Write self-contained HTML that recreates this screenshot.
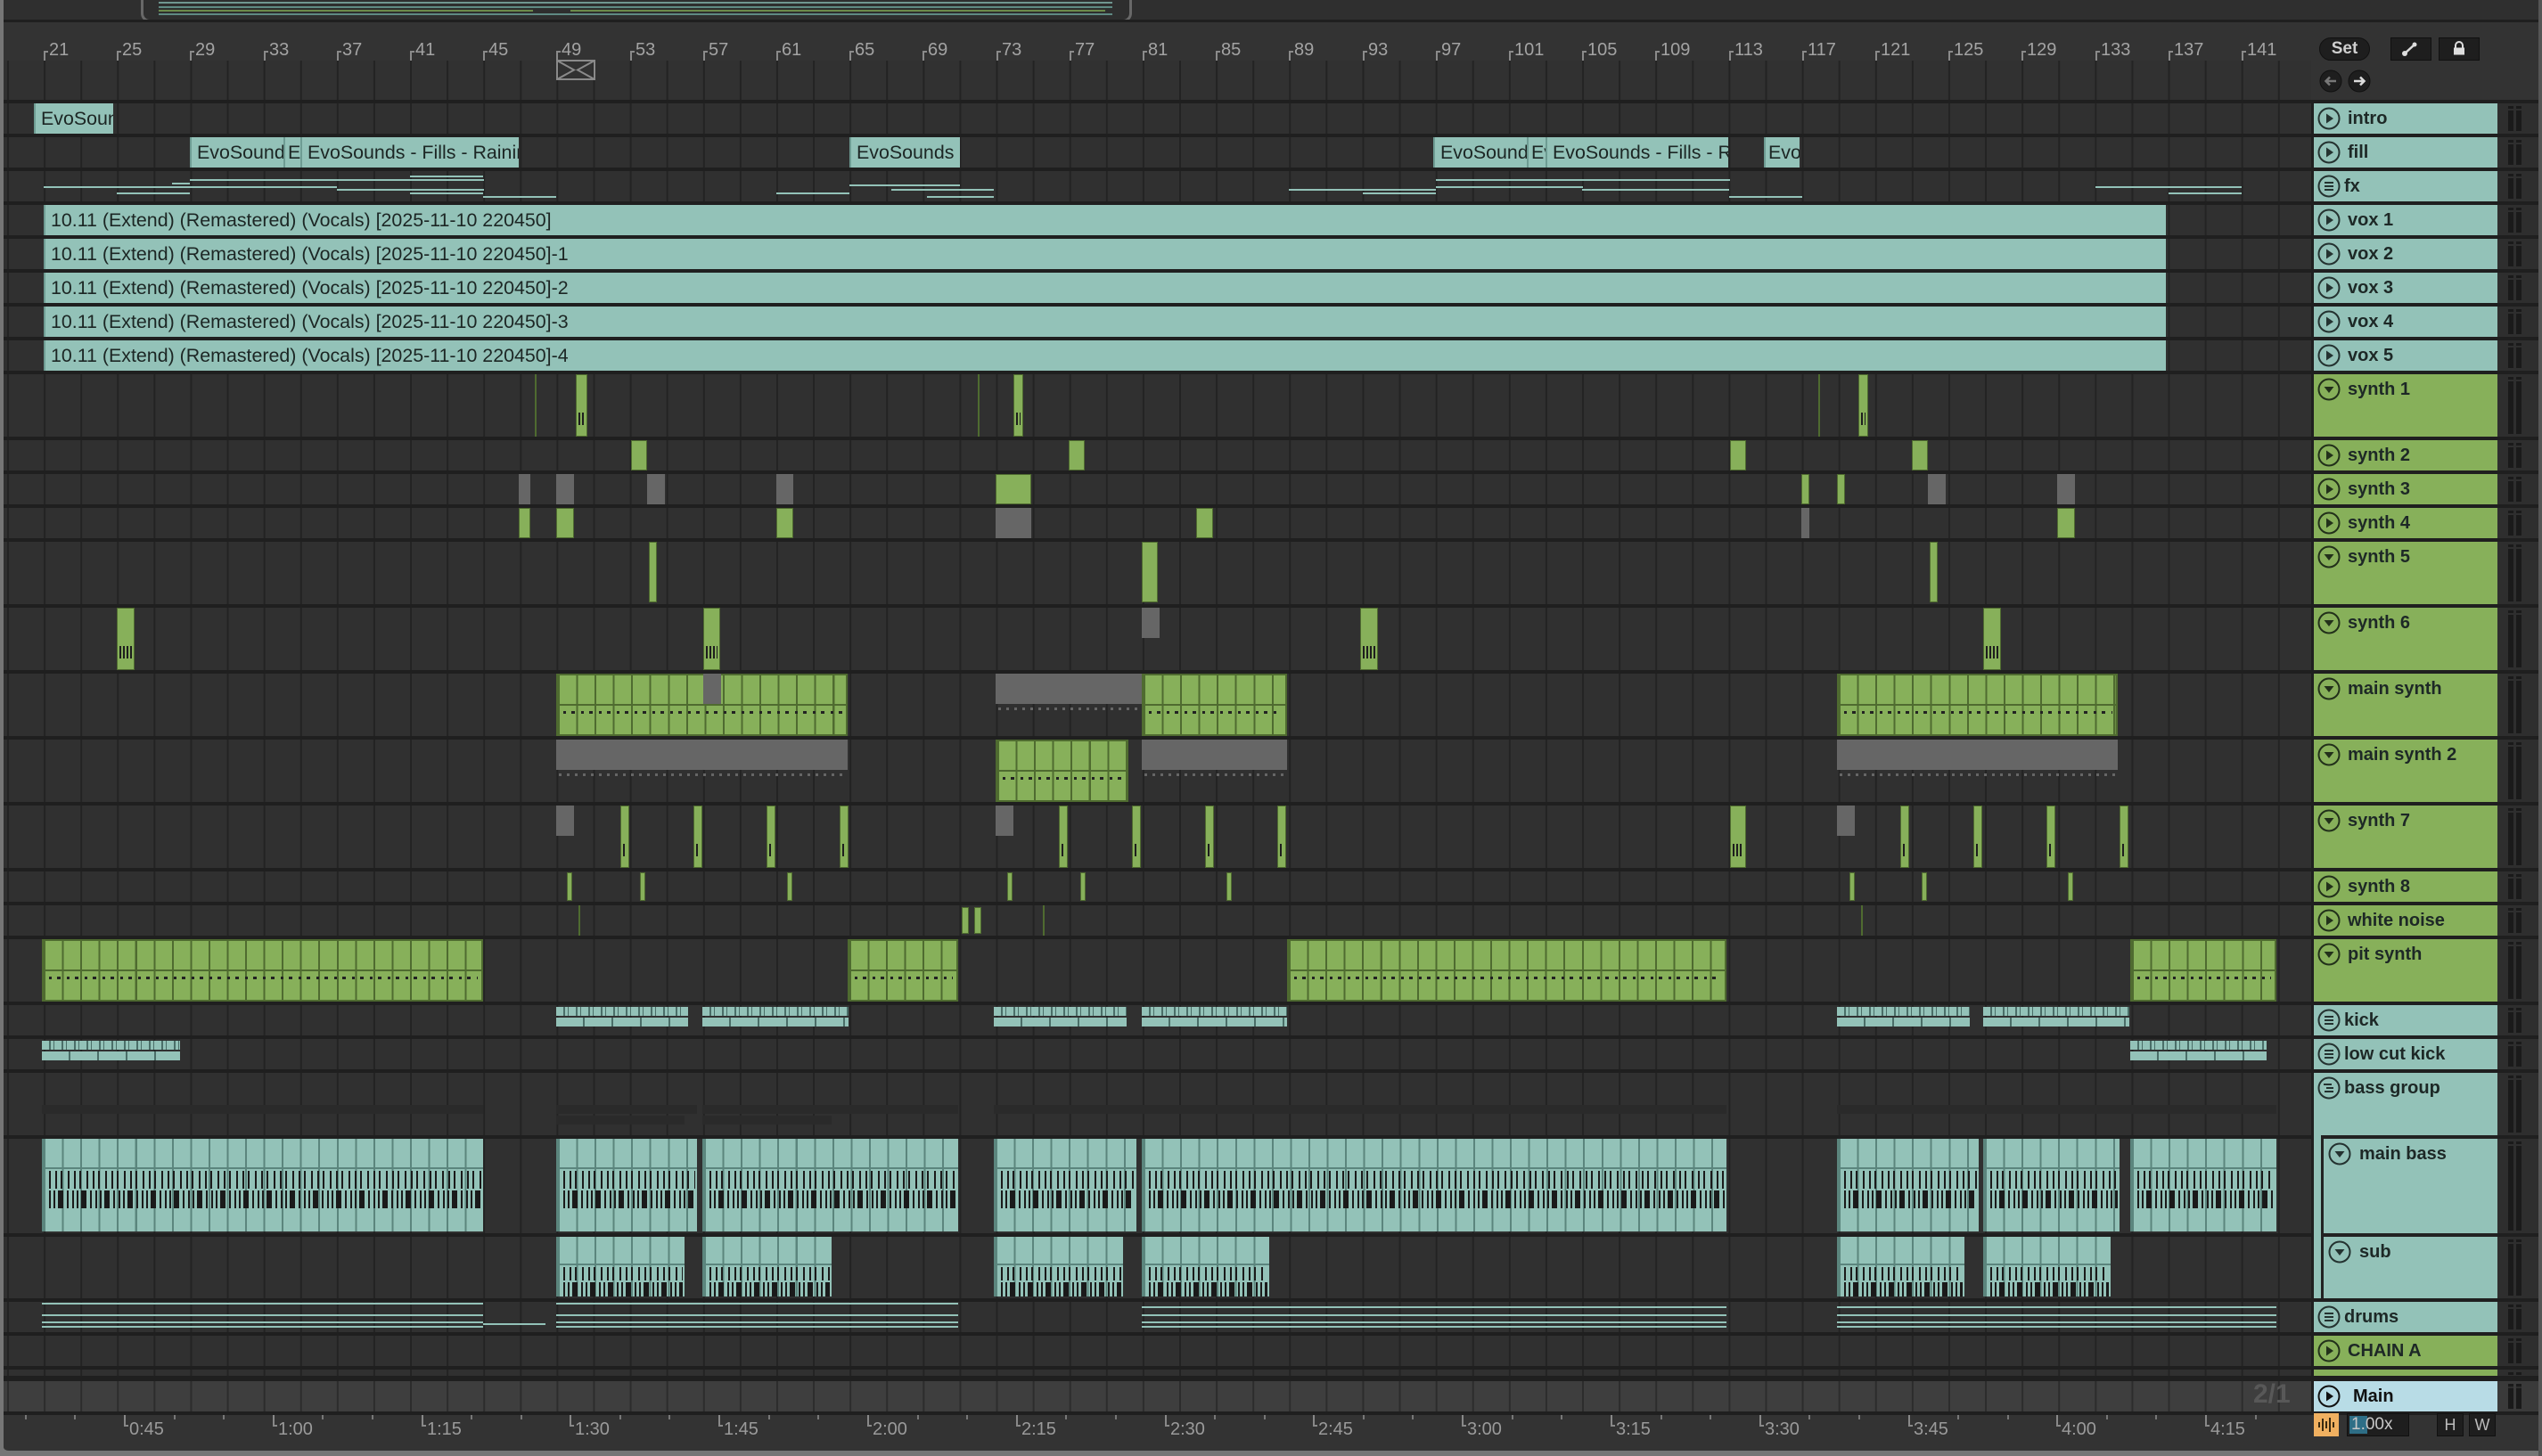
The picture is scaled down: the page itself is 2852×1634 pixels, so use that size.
<!DOCTYPE html>
<html><head><meta charset="utf-8"><style>
body{margin:0;width:2852px;height:1634px;background:#2b2b2b;overflow:hidden;position:relative;font-family:"Liberation Sans",sans-serif}
div{position:absolute;box-sizing:border-box}
.ln{left:4px;width:2589px;background-color:#303030;background-image:linear-gradient(90deg,#232323 0 2px,transparent 2px);background-size:41.1px 100%;background-position:4px 0}
.rn{top:45px;font-size:20px;color:#a3a3a3;letter-spacing:0}
.tk{top:57px;width:2px;height:11px;background:#8a8a8a}
.tk:after{content:"";position:absolute;left:0;top:0;width:5px;height:2px;background:#8a8a8a}
.ac{background:#93c2b8;border-left:2px solid #6e9c93;color:#1c2624;font-size:21.4px;line-height:34px;padding-left:6px;white-space:nowrap;overflow:hidden}
.gc{background-color:#87b05a;background-image:repeating-linear-gradient(90deg,#4f6b30 0 2px,transparent 2px 20.55px);border:2px solid #4f6b30}
.gc:before{content:"";position:absolute;left:0;right:0;top:32px;height:2px;background:#4f6b30}
.gc:after{content:"";position:absolute;left:6px;right:4px;top:40px;height:3px;background:repeating-linear-gradient(90deg,#222 0 3px,transparent 3px 9px,#222 9px 13px,transparent 13px 20px)}
.gy{background:#666}
.gs{background:#87b05a;border:1px solid #4f6b30}
.gs2{background:#87b05a;border:1px solid #4f6b30}
.gs2:after{content:"";position:absolute;left:2px;right:2px;top:42px;height:14px;background:repeating-linear-gradient(90deg,#1e1e1e 0 2px,transparent 2px 4px)}
.gl{width:3px;background:#6f9448}
.bc{background-color:#93c2b8;background-image:repeating-linear-gradient(90deg,#5b857d 0 2px,transparent 2px 20.55px);border-left:2px solid #5b857d}
.bc:before{content:"";position:absolute;left:0;right:0;top:32px;height:2px;background:#5b857d}
.bc i{position:absolute;left:6px;right:2px;top:36px;height:20px;background:repeating-linear-gradient(90deg,#1a1a1a 0 2px,transparent 2px 7px,#1a1a1a 7px 9px,transparent 9px 13px,#1a1a1a 13px 15px,transparent 15px 21px)}
.bc b{position:absolute;left:6px;right:2px;top:58px;height:20px;background:repeating-linear-gradient(90deg,#1a1a1a 0 2px,transparent 2px 5px,#1a1a1a 5px 7px,transparent 7px 10px,#1a1a1a 10px 16px,transparent 16px 20px,#1a1a1a 20px 22px,transparent 22px 26px)}
.sc{background-color:#93c2b8;background-image:repeating-linear-gradient(90deg,#5b857d 0 2px,transparent 2px 20.55px);border-left:2px solid #5b857d}
.sc:before{content:"";position:absolute;left:0;right:0;top:30px;height:2px;background:#5b857d}
.sc i{position:absolute;left:6px;right:2px;top:34px;height:15px;background:repeating-linear-gradient(90deg,#1a1a1a 0 2px,transparent 2px 7px,#1a1a1a 7px 9px,transparent 9px 13px,#1a1a1a 13px 15px,transparent 15px 21px)}
.sc b{position:absolute;left:6px;right:2px;top:51px;height:16px;background:repeating-linear-gradient(90deg,#1a1a1a 0 2px,transparent 2px 5px,#1a1a1a 5px 7px,transparent 7px 10px,#1a1a1a 10px 16px,transparent 16px 20px)}
.kc{height:10px;background:repeating-linear-gradient(90deg,#93c2b8 0 8px,#4a6e68 8px 10px,#93c2b8 10px 13px,#4a6e68 13px 14px)}
.kd{height:10px;background:repeating-linear-gradient(90deg,#93c2b8 0 30px,#4a6e68 30px 32px)}
.hl{height:2px;background:#93c2b8}
.lb{left:2596px;width:206px;font-weight:bold;font-size:20px;color:#1d2826;line-height:34px;padding-left:38px;white-space:nowrap}
.lb svg{position:absolute;left:4px;top:4px}
.t{background:#93c2b8}.g{background:#87b05a}.m{background:#b8dce6;color:#111}
.mt{left:2802px;width:46px;background:#2e2e2e}
.mt:before{content:"";position:absolute;left:12px;top:3px;width:6px;bottom:3px;background:#1a1a1a;border-top:3px solid #1a1a1a;box-shadow:inset 0 2px 0 #2e2e2e}
.mt:after{content:"";position:absolute;left:21px;top:3px;width:6px;bottom:3px;background:#1a1a1a;box-shadow:inset 0 2px 0 #2e2e2e;border-top:3px solid #1a1a1a}
.tl{top:1593px;font-size:20px;color:#9a9a9a}
.tb{top:1588px;width:2px;height:13px;background:#888}
.tb:after{content:"";position:absolute;left:0;bottom:0;width:5px;height:2px;background:#888}
.ts{top:1588px;width:2px;height:5px;background:#777}
</style></head><body>

<div style="left:0;top:0;width:2852px;height:22px;background:#2f2f2f"></div>
<div style="left:158px;top:-6px;width:1112px;height:31px;border:3px solid #686868;border-radius:0 0 10px 10px;background:#2e2e2e"></div>
<div style="left:178px;top:2px;width:1070px;height:2px;background:#6f9690"></div>
<div style="left:178px;top:7px;width:1070px;height:2px;background:#5f8a83"></div>
<div style="left:178px;top:11px;width:420px;height:2px;background:#6b8a4a"></div>
<div style="left:640px;top:11px;width:600px;height:2px;background:#6b8a4a"></div>
<div style="left:178px;top:15px;width:1070px;height:2px;background:#5f8a83"></div>
<div style="left:0;top:22px;width:2852px;height:3px;background:#1f1f1f"></div>
<div style="left:0;top:25px;width:2596px;height:43px;background:#333"></div>
<div class="ln" style="top:68px;height:44px;background-color:#313131"></div>
<div style="left:2596px;top:25px;width:252px;height:87px;background:#333"></div>
<div style="left:2593px;top:68px;width:3px;height:44px;background:#333"></div>

<div class="tk" style="left:49px"></div><div class="rn" style="left:55px">21</div>
<div class="tk" style="left:131px"></div><div class="rn" style="left:137px">25</div>
<div class="tk" style="left:213px"></div><div class="rn" style="left:219px">29</div>
<div class="tk" style="left:296px"></div><div class="rn" style="left:302px">33</div>
<div class="tk" style="left:378px"></div><div class="rn" style="left:384px">37</div>
<div class="tk" style="left:460px"></div><div class="rn" style="left:466px">41</div>
<div class="tk" style="left:542px"></div><div class="rn" style="left:548px">45</div>
<div class="tk" style="left:624px"></div><div class="rn" style="left:630px">49</div>
<div class="tk" style="left:707px"></div><div class="rn" style="left:713px">53</div>
<div class="tk" style="left:789px"></div><div class="rn" style="left:795px">57</div>
<div class="tk" style="left:871px"></div><div class="rn" style="left:877px">61</div>
<div class="tk" style="left:953px"></div><div class="rn" style="left:959px">65</div>
<div class="tk" style="left:1035px"></div><div class="rn" style="left:1041px">69</div>
<div class="tk" style="left:1118px"></div><div class="rn" style="left:1124px">73</div>
<div class="tk" style="left:1200px"></div><div class="rn" style="left:1206px">77</div>
<div class="tk" style="left:1282px"></div><div class="rn" style="left:1288px">81</div>
<div class="tk" style="left:1364px"></div><div class="rn" style="left:1370px">85</div>
<div class="tk" style="left:1446px"></div><div class="rn" style="left:1452px">89</div>
<div class="tk" style="left:1529px"></div><div class="rn" style="left:1535px">93</div>
<div class="tk" style="left:1611px"></div><div class="rn" style="left:1617px">97</div>
<div class="tk" style="left:1693px"></div><div class="rn" style="left:1699px">101</div>
<div class="tk" style="left:1775px"></div><div class="rn" style="left:1781px">105</div>
<div class="tk" style="left:1857px"></div><div class="rn" style="left:1863px">109</div>
<div class="tk" style="left:1940px"></div><div class="rn" style="left:1946px">113</div>
<div class="tk" style="left:2022px"></div><div class="rn" style="left:2028px">117</div>
<div class="tk" style="left:2104px"></div><div class="rn" style="left:2110px">121</div>
<div class="tk" style="left:2186px"></div><div class="rn" style="left:2192px">125</div>
<div class="tk" style="left:2268px"></div><div class="rn" style="left:2274px">129</div>
<div class="tk" style="left:2351px"></div><div class="rn" style="left:2357px">133</div>
<div class="tk" style="left:2433px"></div><div class="rn" style="left:2439px">137</div>
<div class="tk" style="left:2515px"></div><div class="rn" style="left:2521px">141</div>

<svg style="position:absolute;left:624px;top:67px" width="44" height="23" viewBox="0 0 44 23"><rect x="1" y="1" width="42" height="21" fill="none" stroke="#8a8a8a" stroke-width="2"/><path d="M1 1 L20 11.5 L1 22 M43 1 L24 11.5 L43 22" fill="none" stroke="#8a8a8a" stroke-width="2"/></svg>

<div style="left:2602px;top:42px;width:57px;height:26px;border-radius:13px;background:#1e1e1e;border:1px solid #111;color:#cfcfcf;font-size:19px;font-weight:bold;line-height:24px;text-align:center">Set</div>
<div style="left:2682px;top:42px;width:46px;height:26px;background:#1e1e1e;border:1px solid #111"></div>
<svg style="position:absolute;left:2694px;top:46px" width="20" height="18"><path d="M4 14 L15 4" stroke="#ddd" stroke-width="2.5"/><circle cx="4" cy="14" r="3" fill="#ddd"/><circle cx="15" cy="4" r="2.5" fill="#ddd"/></svg>
<div style="left:2736px;top:42px;width:46px;height:26px;background:#1e1e1e;border:1px solid #111"></div>
<svg style="position:absolute;left:2750px;top:45px" width="18" height="18"><path d="M5 9 V6 a4 4 0 0 1 8 0 V9" fill="none" stroke="#ddd" stroke-width="2"/><rect x="3" y="8.5" width="12" height="8" fill="#ddd"/></svg>
<svg style="position:absolute;left:2602px;top:78px" width="58" height="27"><circle cx="13" cy="13" r="12" fill="#1e1e1e" stroke="#111"/><path d="M19 13 H8 M12 8.5 L7.5 13 L12 17.5" fill="none" stroke="#777" stroke-width="2.5"/><circle cx="45" cy="13" r="12" fill="#1e1e1e" stroke="#111"/><path d="M39 13 H50 M46 8.5 L50.5 13 L46 17.5" fill="none" stroke="#ddd" stroke-width="2.5"/></svg>

<div style="left:0;top:112px;width:2596px;height:1476px;background:#1f1f1f"></div>
<div style="left:2596px;top:112px;width:252px;height:1476px;background:#1f1f1f"></div>

<div class="ln" style="top:116px;height:34px"></div>
<div class="ln" style="top:154px;height:34px"></div>
<div class="ln" style="top:192px;height:34px"></div>
<div class="ln" style="top:230px;height:34px"></div>
<div class="ln" style="top:268px;height:34px"></div>
<div class="ln" style="top:306px;height:34px"></div>
<div class="ln" style="top:344px;height:34px"></div>
<div class="ln" style="top:382px;height:34px"></div>
<div class="ln" style="top:420px;height:70px"></div>
<div class="ln" style="top:494px;height:34px"></div>
<div class="ln" style="top:532px;height:34px"></div>
<div class="ln" style="top:570px;height:34px"></div>
<div class="ln" style="top:608px;height:70px"></div>
<div class="ln" style="top:682px;height:70px"></div>
<div class="ln" style="top:756px;height:70px"></div>
<div class="ln" style="top:830px;height:70px"></div>
<div class="ln" style="top:904px;height:70px"></div>
<div class="ln" style="top:978px;height:34px"></div>
<div class="ln" style="top:1016px;height:34px"></div>
<div class="ln" style="top:1054px;height:70px"></div>
<div class="ln" style="top:1128px;height:34px"></div>
<div class="ln" style="top:1166px;height:34px"></div>
<div class="ln" style="top:1204px;height:70px"></div>
<div class="ln" style="top:1278px;height:106px"></div>
<div class="ln" style="top:1388px;height:69px"></div>
<div class="ln" style="top:1461px;height:34px"></div>
<div class="ln" style="top:1499px;height:34px"></div>
<div class="ln" style="top:1537px;height:7px"></div>
<div class="ln" style="top:1550px;height:34px;background-color:#3e3e3e;background-image:linear-gradient(90deg,#2c2c2c 0 2px,transparent 2px)"></div>

<div class="ac" style="left:38px;top:116px;width:89px;height:34px">EvoSoun</div>
<div class="ac" style="left:213px;top:154px;width:105px;height:34px">EvoSounds - Fills</div>
<div class="ac" style="left:318px;top:154px;width:19px;height:34px;padding-left:3px">Ev</div>
<div class="ac" style="left:337px;top:154px;width:245px;height:34px">EvoSounds - Fills - Raining</div>
<div class="ac" style="left:953px;top:154px;width:124px;height:34px">EvoSounds - Fills</div>
<div class="ac" style="left:1608px;top:154px;width:105px;height:34px">EvoSounds - Fills</div>
<div class="ac" style="left:1713px;top:154px;width:21px;height:34px;padding-left:3px">Ev</div>
<div class="ac" style="left:1734px;top:154px;width:205px;height:34px">EvoSounds - Fills - Raining</div>
<div class="ac" style="left:1979px;top:154px;width:40px;height:34px;padding-left:3px">EvoSounds</div>

<div class="hl" style="left:49px;top:209px;width:164px"></div>
<div class="hl" style="left:131px;top:216px;width:82px"></div>
<div class="hl" style="left:193px;top:205px;width:20px"></div>
<div class="hl" style="left:213px;top:201px;width:330px"></div>
<div class="hl" style="left:213px;top:209px;width:165px"></div>
<div class="hl" style="left:378px;top:212px;width:165px"></div>
<div class="hl" style="left:460px;top:197px;width:82px"></div>
<div class="hl" style="left:460px;top:216px;width:82px"></div>
<div class="hl" style="left:542px;top:220px;width:82px"></div>
<div class="hl" style="left:871px;top:216px;width:82px"></div>
<div class="hl" style="left:953px;top:207px;width:124px"></div>
<div class="hl" style="left:1000px;top:212px;width:115px"></div>
<div class="hl" style="left:1040px;top:220px;width:75px"></div>
<div class="hl" style="left:1446px;top:212px;width:165px"></div>
<div class="hl" style="left:1529px;top:216px;width:82px"></div>
<div class="hl" style="left:1611px;top:201px;width:330px"></div>
<div class="hl" style="left:1611px;top:209px;width:165px"></div>
<div class="hl" style="left:1775px;top:212px;width:165px"></div>
<div class="hl" style="left:1940px;top:220px;width:82px"></div>
<div class="hl" style="left:2351px;top:209px;width:164px"></div>
<div class="hl" style="left:2433px;top:216px;width:82px"></div>

<div class="ac" style="left:49px;top:230px;width:2381px;height:34px">10.11 (Extend) (Remastered) (Vocals) [2025-11-10 220450]</div>
<div class="ac" style="left:49px;top:268px;width:2381px;height:34px">10.11 (Extend) (Remastered) (Vocals) [2025-11-10 220450]-1</div>
<div class="ac" style="left:49px;top:306px;width:2381px;height:34px">10.11 (Extend) (Remastered) (Vocals) [2025-11-10 220450]-2</div>
<div class="ac" style="left:49px;top:344px;width:2381px;height:34px">10.11 (Extend) (Remastered) (Vocals) [2025-11-10 220450]-3</div>
<div class="ac" style="left:49px;top:382px;width:2381px;height:34px">10.11 (Extend) (Remastered) (Vocals) [2025-11-10 220450]-4</div>

<div class="gl" style="left:600px;top:420px;height:70px;width:2px;background:#4f6b30"></div>
<div class="gs2" style="left:646px;top:420px;width:13px;height:70px"></div>
<div class="gl" style="left:1097px;top:420px;height:70px;width:2px;background:#4f6b30"></div>
<div class="gs2" style="left:1137px;top:420px;width:11px;height:70px"></div>
<div class="gl" style="left:2040px;top:420px;height:70px;width:2px;background:#4f6b30"></div>
<div class="gs2" style="left:2085px;top:420px;width:11px;height:70px"></div>
<div class="gs" style="left:708px;top:494px;width:18px;height:34px"></div>
<div class="gs" style="left:1199px;top:494px;width:18px;height:34px"></div>
<div class="gs" style="left:1941px;top:494px;width:18px;height:34px"></div>
<div class="gs" style="left:2145px;top:494px;width:18px;height:34px"></div>
<div class="gy" style="left:582px;top:532px;width:13px;height:34px"></div>
<div class="gy" style="left:624px;top:532px;width:20px;height:34px"></div>
<div class="gy" style="left:726px;top:532px;width:20px;height:34px"></div>
<div class="gy" style="left:871px;top:532px;width:19px;height:34px"></div>
<div class="gs" style="left:1117px;top:532px;width:40px;height:34px"></div>
<div class="gs" style="left:2021px;top:532px;width:9px;height:34px"></div>
<div class="gs" style="left:2061px;top:532px;width:9px;height:34px"></div>
<div class="gy" style="left:2163px;top:532px;width:20px;height:34px"></div>
<div class="gy" style="left:2308px;top:532px;width:20px;height:34px"></div>
<div class="gs" style="left:582px;top:570px;width:13px;height:34px"></div>
<div class="gs" style="left:624px;top:570px;width:20px;height:34px"></div>
<div class="gs" style="left:871px;top:570px;width:19px;height:34px"></div>
<div class="gy" style="left:1117px;top:570px;width:40px;height:34px"></div>
<div class="gs" style="left:1342px;top:570px;width:19px;height:34px"></div>
<div class="gy" style="left:2021px;top:570px;width:9px;height:34px"></div>
<div class="gs" style="left:2308px;top:570px;width:20px;height:34px"></div>
<div class="gs" style="left:728px;top:608px;width:9px;height:68px"></div>
<div class="gs" style="left:1281px;top:608px;width:18px;height:68px"></div>
<div class="gs" style="left:2165px;top:608px;width:9px;height:68px"></div>
<div class="gs2" style="left:131px;top:682px;width:20px;height:70px"></div>
<div class="gs2" style="left:789px;top:682px;width:19px;height:70px"></div>
<div class="gy" style="left:1281px;top:682px;width:20px;height:34px"></div>
<div class="gs2" style="left:1526px;top:682px;width:20px;height:70px"></div>
<div class="gs2" style="left:2225px;top:682px;width:20px;height:70px"></div>
<div class="gc" style="left:624px;top:756px;width:327px;height:70px"></div>
<div class="gy" style="left:789px;top:756px;width:20px;height:34px"></div>
<div class="gy" style="left:1117px;top:756px;width:164px;height:34px"></div>
<div style="left:1120px;top:794px;width:158px;height:3px;background:repeating-linear-gradient(90deg,#666 0 3px,transparent 3px 9px)"></div>
<div class="gc" style="left:1281px;top:756px;width:163px;height:70px"></div>
<div class="gc" style="left:2061px;top:756px;width:315px;height:70px"></div>
<div class="gy" style="left:624px;top:830px;width:327px;height:34px"></div>
<div style="left:627px;top:868px;width:321px;height:3px;background:repeating-linear-gradient(90deg,#666 0 3px,transparent 3px 9px)"></div>
<div class="gc" style="left:1117px;top:830px;width:149px;height:70px"></div>
<div class="gy" style="left:1281px;top:830px;width:163px;height:34px"></div>
<div style="left:1284px;top:868px;width:157px;height:3px;background:repeating-linear-gradient(90deg,#666 0 3px,transparent 3px 9px)"></div>
<div class="gy" style="left:2061px;top:830px;width:315px;height:34px"></div>
<div style="left:2064px;top:868px;width:309px;height:3px;background:repeating-linear-gradient(90deg,#666 0 3px,transparent 3px 9px)"></div>
<div class="gy" style="left:624px;top:904px;width:20px;height:34px"></div>
<div class="gs2" style="left:696px;top:904px;width:10px;height:70px"></div>
<div class="gs2" style="left:778px;top:904px;width:10px;height:70px"></div>
<div class="gs2" style="left:860px;top:904px;width:10px;height:70px"></div>
<div class="gs2" style="left:942px;top:904px;width:10px;height:70px"></div>
<div class="gy" style="left:1117px;top:904px;width:20px;height:34px"></div>
<div class="gs2" style="left:1188px;top:904px;width:10px;height:70px"></div>
<div class="gs2" style="left:1270px;top:904px;width:10px;height:70px"></div>
<div class="gs2" style="left:1352px;top:904px;width:10px;height:70px"></div>
<div class="gs2" style="left:1433px;top:904px;width:10px;height:70px"></div>
<div class="gs2" style="left:1941px;top:904px;width:18px;height:70px"></div>
<div class="gy" style="left:2061px;top:904px;width:20px;height:34px"></div>
<div class="gs2" style="left:2132px;top:904px;width:10px;height:70px"></div>
<div class="gs2" style="left:2214px;top:904px;width:10px;height:70px"></div>
<div class="gs2" style="left:2296px;top:904px;width:10px;height:70px"></div>
<div class="gs2" style="left:2378px;top:904px;width:10px;height:70px"></div>
<div class="gs" style="left:636px;top:979px;width:6px;height:32px"></div>
<div class="gs" style="left:718px;top:979px;width:6px;height:32px"></div>
<div class="gs" style="left:883px;top:979px;width:6px;height:32px"></div>
<div class="gs" style="left:1130px;top:979px;width:6px;height:32px"></div>
<div class="gs" style="left:1212px;top:979px;width:6px;height:32px"></div>
<div class="gs" style="left:1376px;top:979px;width:6px;height:32px"></div>
<div class="gs" style="left:2075px;top:979px;width:6px;height:32px"></div>
<div class="gs" style="left:2156px;top:979px;width:6px;height:32px"></div>
<div class="gs" style="left:2320px;top:979px;width:6px;height:32px"></div>
<div class="gl" style="left:649px;top:1016px;height:34px;width:2px;background:#4f6b30"></div>
<div class="gs" style="left:1079px;top:1018px;width:8px;height:30px"></div>
<div class="gs" style="left:1093px;top:1018px;width:8px;height:30px"></div>
<div class="gl" style="left:1170px;top:1016px;height:34px;width:2px;background:#4f6b30"></div>
<div class="gl" style="left:2088px;top:1016px;height:34px;width:2px;background:#4f6b30"></div>
<div class="gc" style="left:47px;top:1054px;width:495px;height:70px"></div>
<div class="gc" style="left:951px;top:1054px;width:124px;height:70px"></div>
<div class="gc" style="left:1444px;top:1054px;width:493px;height:70px"></div>
<div class="gc" style="left:2390px;top:1054px;width:164px;height:70px"></div>
<div class="kc" style="left:624px;top:1130px;width:148px"></div><div class="kd" style="left:624px;top:1142px;width:148px"></div>
<div class="kc" style="left:788px;top:1130px;width:164px"></div><div class="kd" style="left:788px;top:1142px;width:164px"></div>
<div class="kc" style="left:1115px;top:1130px;width:149px"></div><div class="kd" style="left:1115px;top:1142px;width:149px"></div>
<div class="kc" style="left:1281px;top:1130px;width:163px"></div><div class="kd" style="left:1281px;top:1142px;width:163px"></div>
<div class="kc" style="left:2061px;top:1130px;width:149px"></div><div class="kd" style="left:2061px;top:1142px;width:149px"></div>
<div class="kc" style="left:2225px;top:1130px;width:164px"></div><div class="kd" style="left:2225px;top:1142px;width:164px"></div>
<div class="kc" style="left:47px;top:1168px;width:155px"></div><div class="kd" style="left:47px;top:1180px;width:155px"></div>
<div class="kc" style="left:2390px;top:1168px;width:153px"></div><div class="kd" style="left:2390px;top:1180px;width:153px"></div>
<div style="left:47px;top:1240px;width:495px;height:10px;background:#2a2a2a"></div>
<div style="left:624px;top:1240px;width:158px;height:10px;background:#2a2a2a"></div>
<div style="left:788px;top:1240px;width:287px;height:10px;background:#2a2a2a"></div>
<div style="left:1115px;top:1240px;width:822px;height:10px;background:#2a2a2a"></div>
<div style="left:2061px;top:1240px;width:493px;height:10px;background:#2a2a2a"></div>
<div style="left:624px;top:1252px;width:144px;height:10px;background:#2a2a2a"></div>
<div style="left:788px;top:1252px;width:145px;height:10px;background:#2a2a2a"></div>
<div class="bc" style="left:47px;top:1278px;width:495px;height:104px"><i></i><b></b></div>
<div class="bc" style="left:624px;top:1278px;width:158px;height:104px"><i></i><b></b></div>
<div class="bc" style="left:788px;top:1278px;width:287px;height:104px"><i></i><b></b></div>
<div class="bc" style="left:1115px;top:1278px;width:160px;height:104px"><i></i><b></b></div>
<div class="bc" style="left:1281px;top:1278px;width:656px;height:104px"><i></i><b></b></div>
<div class="bc" style="left:2061px;top:1278px;width:159px;height:104px"><i></i><b></b></div>
<div class="bc" style="left:2225px;top:1278px;width:153px;height:104px"><i></i><b></b></div>
<div class="bc" style="left:2390px;top:1278px;width:164px;height:104px"><i></i><b></b></div>
<div class="sc" style="left:624px;top:1388px;width:144px;height:67px"><i></i><b></b></div>
<div class="sc" style="left:788px;top:1388px;width:145px;height:67px"><i></i><b></b></div>
<div class="sc" style="left:1115px;top:1388px;width:145px;height:67px"><i></i><b></b></div>
<div class="sc" style="left:1281px;top:1388px;width:143px;height:67px"><i></i><b></b></div>
<div class="sc" style="left:2061px;top:1388px;width:143px;height:67px"><i></i><b></b></div>
<div class="sc" style="left:2225px;top:1388px;width:143px;height:67px"><i></i><b></b></div>
<div class="hl" style="left:47px;top:1462px;width:495px"></div>
<div class="hl" style="left:47px;top:1475px;width:495px"></div>
<div class="hl" style="left:47px;top:1483px;width:495px"></div>
<div class="hl" style="left:47px;top:1488px;width:495px"></div>
<div class="hl" style="left:542px;top:1485px;width:70px"></div>
<div class="hl" style="left:624px;top:1462px;width:451px"></div>
<div class="hl" style="left:624px;top:1475px;width:451px"></div>
<div class="hl" style="left:624px;top:1483px;width:451px"></div>
<div class="hl" style="left:624px;top:1488px;width:451px"></div>
<div class="hl" style="left:1281px;top:1466px;width:656px"></div>
<div class="hl" style="left:1281px;top:1475px;width:656px"></div>
<div class="hl" style="left:1281px;top:1483px;width:656px"></div>
<div class="hl" style="left:1281px;top:1488px;width:656px"></div>
<div class="hl" style="left:2061px;top:1466px;width:493px"></div>
<div class="hl" style="left:2061px;top:1475px;width:493px"></div>
<div class="hl" style="left:2061px;top:1483px;width:493px"></div>
<div class="hl" style="left:2061px;top:1488px;width:493px"></div>

<div class="lb t" style="top:116px;height:34px"><svg width="26" height="26"><circle cx="13" cy="13" r="11.5" fill="none" stroke="#243230" stroke-width="2"/><path d="M10 7.5L18 13L10 18.5Z" fill="#243230"/></svg>intro</div>
<div class="lb t" style="top:154px;height:34px"><svg width="26" height="26"><circle cx="13" cy="13" r="11.5" fill="none" stroke="#243230" stroke-width="2"/><path d="M10 7.5L18 13L10 18.5Z" fill="#243230"/></svg>fill</div>
<div class="lb t" style="top:192px;height:34px;padding-left:34px"><svg width="26" height="26"><circle cx="13" cy="13" r="11.5" fill="none" stroke="#243230" stroke-width="2"/><path d="M8 9h10M8 13h10M8 17h10" stroke="#243230" stroke-width="2"/></svg>fx</div>
<div class="lb t" style="top:230px;height:34px"><svg width="26" height="26"><circle cx="13" cy="13" r="11.5" fill="none" stroke="#243230" stroke-width="2"/><path d="M10 7.5L18 13L10 18.5Z" fill="#243230"/></svg>vox 1</div>
<div class="lb t" style="top:268px;height:34px"><svg width="26" height="26"><circle cx="13" cy="13" r="11.5" fill="none" stroke="#243230" stroke-width="2"/><path d="M10 7.5L18 13L10 18.5Z" fill="#243230"/></svg>vox 2</div>
<div class="lb t" style="top:306px;height:34px"><svg width="26" height="26"><circle cx="13" cy="13" r="11.5" fill="none" stroke="#243230" stroke-width="2"/><path d="M10 7.5L18 13L10 18.5Z" fill="#243230"/></svg>vox 3</div>
<div class="lb t" style="top:344px;height:34px"><svg width="26" height="26"><circle cx="13" cy="13" r="11.5" fill="none" stroke="#243230" stroke-width="2"/><path d="M10 7.5L18 13L10 18.5Z" fill="#243230"/></svg>vox 4</div>
<div class="lb t" style="top:382px;height:34px"><svg width="26" height="26"><circle cx="13" cy="13" r="11.5" fill="none" stroke="#243230" stroke-width="2"/><path d="M10 7.5L18 13L10 18.5Z" fill="#243230"/></svg>vox 5</div>
<div class="lb g" style="top:420px;height:70px"><svg width="26" height="26"><circle cx="13" cy="13" r="11.5" fill="none" stroke="#22301a" stroke-width="2"/><path d="M7.5 10H18.5L13 17Z" fill="#22301a"/></svg>synth 1</div>
<div class="lb g" style="top:494px;height:34px"><svg width="26" height="26"><circle cx="13" cy="13" r="11.5" fill="none" stroke="#22301a" stroke-width="2"/><path d="M10 7.5L18 13L10 18.5Z" fill="#22301a"/></svg>synth 2</div>
<div class="lb g" style="top:532px;height:34px"><svg width="26" height="26"><circle cx="13" cy="13" r="11.5" fill="none" stroke="#22301a" stroke-width="2"/><path d="M10 7.5L18 13L10 18.5Z" fill="#22301a"/></svg>synth 3</div>
<div class="lb g" style="top:570px;height:34px"><svg width="26" height="26"><circle cx="13" cy="13" r="11.5" fill="none" stroke="#22301a" stroke-width="2"/><path d="M10 7.5L18 13L10 18.5Z" fill="#22301a"/></svg>synth 4</div>
<div class="lb g" style="top:608px;height:70px"><svg width="26" height="26"><circle cx="13" cy="13" r="11.5" fill="none" stroke="#22301a" stroke-width="2"/><path d="M7.5 10H18.5L13 17Z" fill="#22301a"/></svg>synth 5</div>
<div class="lb g" style="top:682px;height:70px"><svg width="26" height="26"><circle cx="13" cy="13" r="11.5" fill="none" stroke="#22301a" stroke-width="2"/><path d="M7.5 10H18.5L13 17Z" fill="#22301a"/></svg>synth 6</div>
<div class="lb g" style="top:756px;height:70px"><svg width="26" height="26"><circle cx="13" cy="13" r="11.5" fill="none" stroke="#22301a" stroke-width="2"/><path d="M7.5 10H18.5L13 17Z" fill="#22301a"/></svg>main synth</div>
<div class="lb g" style="top:830px;height:70px"><svg width="26" height="26"><circle cx="13" cy="13" r="11.5" fill="none" stroke="#22301a" stroke-width="2"/><path d="M7.5 10H18.5L13 17Z" fill="#22301a"/></svg>main synth 2</div>
<div class="lb g" style="top:904px;height:70px"><svg width="26" height="26"><circle cx="13" cy="13" r="11.5" fill="none" stroke="#22301a" stroke-width="2"/><path d="M7.5 10H18.5L13 17Z" fill="#22301a"/></svg>synth 7</div>
<div class="lb g" style="top:978px;height:34px"><svg width="26" height="26"><circle cx="13" cy="13" r="11.5" fill="none" stroke="#22301a" stroke-width="2"/><path d="M10 7.5L18 13L10 18.5Z" fill="#22301a"/></svg>synth 8</div>
<div class="lb g" style="top:1016px;height:34px"><svg width="26" height="26"><circle cx="13" cy="13" r="11.5" fill="none" stroke="#22301a" stroke-width="2"/><path d="M10 7.5L18 13L10 18.5Z" fill="#22301a"/></svg>white noise</div>
<div class="lb g" style="top:1054px;height:70px"><svg width="26" height="26"><circle cx="13" cy="13" r="11.5" fill="none" stroke="#22301a" stroke-width="2"/><path d="M7.5 10H18.5L13 17Z" fill="#22301a"/></svg>pit synth</div>
<div class="lb t" style="top:1128px;height:34px;padding-left:34px"><svg width="26" height="26"><circle cx="13" cy="13" r="11.5" fill="none" stroke="#243230" stroke-width="2"/><path d="M8 9h10M8 13h10M8 17h10" stroke="#243230" stroke-width="2"/></svg>kick</div>
<div class="lb t" style="top:1166px;height:34px;padding-left:34px"><svg width="26" height="26"><circle cx="13" cy="13" r="11.5" fill="none" stroke="#243230" stroke-width="2"/><path d="M8 9h10M8 13h10M8 17h10" stroke="#243230" stroke-width="2"/></svg>low cut kick</div>
<div class="lb t" style="top:1204px;height:253px;padding-left:34px"><svg width="26" height="26"><circle cx="13" cy="13" r="11.5" fill="none" stroke="#243230" stroke-width="2"/><path d="M7 9h9M10 13h8M8 17h10" stroke="#243230" stroke-width="2"/></svg>bass group</div>
<div class="lb t" style="left:2604px;width:198px;top:1274px;height:110px;border-left:3px solid #222;border-top:4px solid #222;padding-left:40px"><svg width="26" height="26" style="left:5px"><circle cx="13" cy="13" r="11.5" fill="none" stroke="#243230" stroke-width="2"/><path d="M7.5 10H18.5L13 17Z" fill="#243230"/></svg>main bass</div>
<div class="lb t" style="left:2604px;width:198px;top:1384px;height:73px;border-left:3px solid #222;border-top:4px solid #222;padding-left:40px"><svg width="26" height="26" style="left:5px"><circle cx="13" cy="13" r="11.5" fill="none" stroke="#243230" stroke-width="2"/><path d="M7.5 10H18.5L13 17Z" fill="#243230"/></svg>sub</div>
<div class="lb t" style="top:1461px;height:34px;padding-left:34px"><svg width="26" height="26"><circle cx="13" cy="13" r="11.5" fill="none" stroke="#243230" stroke-width="2"/><path d="M8 9h10M8 13h10M8 17h10" stroke="#243230" stroke-width="2"/></svg>drums</div>
<div class="lb g" style="top:1499px;height:34px"><svg width="26" height="26"><circle cx="13" cy="13" r="11.5" fill="none" stroke="#22301a" stroke-width="2"/><path d="M10 7.5L18 13L10 18.5Z" fill="#22301a"/></svg>CHAIN A</div>
<div class="lb g" style="top:1537px;height:7px"></div>
<div class="lb m" style="top:1550px;height:34px;padding-left:44px"><svg width="26" height="26"><circle cx="13" cy="13" r="11.5" fill="none" stroke="#111" stroke-width="2"/><path d="M10 7.5L18 13L10 18.5Z" fill="#111"/></svg>Main</div>

<div class="mt" style="top:116px;height:34px"></div>
<div class="mt" style="top:154px;height:34px"></div>
<div class="mt" style="top:192px;height:34px"></div>
<div class="mt" style="top:230px;height:34px"></div>
<div class="mt" style="top:268px;height:34px"></div>
<div class="mt" style="top:306px;height:34px"></div>
<div class="mt" style="top:344px;height:34px"></div>
<div class="mt" style="top:382px;height:34px"></div>
<div class="mt" style="top:420px;height:70px"></div>
<div class="mt" style="top:494px;height:34px"></div>
<div class="mt" style="top:532px;height:34px"></div>
<div class="mt" style="top:570px;height:34px"></div>
<div class="mt" style="top:608px;height:70px"></div>
<div class="mt" style="top:682px;height:70px"></div>
<div class="mt" style="top:756px;height:70px"></div>
<div class="mt" style="top:830px;height:70px"></div>
<div class="mt" style="top:904px;height:70px"></div>
<div class="mt" style="top:978px;height:34px"></div>
<div class="mt" style="top:1016px;height:34px"></div>
<div class="mt" style="top:1054px;height:70px"></div>
<div class="mt" style="top:1128px;height:34px"></div>
<div class="mt" style="top:1166px;height:34px"></div>
<div class="mt" style="top:1204px;height:70px"></div>
<div class="mt" style="top:1278px;height:106px"></div>
<div class="mt" style="top:1388px;height:69px"></div>
<div class="mt" style="top:1461px;height:34px"></div>
<div class="mt" style="top:1499px;height:34px"></div>
<div class="mt" style="top:1537px;height:7px"></div>
<div class="mt" style="top:1550px;height:34px;background:#3a3a3a"></div>

<div style="left:2528px;top:1548px;font-size:30px;font-weight:bold;color:#585858">2/1</div>

<div style="left:0;top:1588px;width:2852px;height:46px;background:#333"></div>
<div class="tb" style="left:139px"></div><div class="tl" style="left:145px">0:45</div>
<div class="tb" style="left:306px"></div><div class="tl" style="left:312px">1:00</div>
<div class="tb" style="left:473px"></div><div class="tl" style="left:479px">1:15</div>
<div class="tb" style="left:639px"></div><div class="tl" style="left:645px">1:30</div>
<div class="tb" style="left:806px"></div><div class="tl" style="left:812px">1:45</div>
<div class="tb" style="left:973px"></div><div class="tl" style="left:979px">2:00</div>
<div class="tb" style="left:1140px"></div><div class="tl" style="left:1146px">2:15</div>
<div class="tb" style="left:1307px"></div><div class="tl" style="left:1313px">2:30</div>
<div class="tb" style="left:1473px"></div><div class="tl" style="left:1479px">2:45</div>
<div class="tb" style="left:1640px"></div><div class="tl" style="left:1646px">3:00</div>
<div class="tb" style="left:1807px"></div><div class="tl" style="left:1813px">3:15</div>
<div class="tb" style="left:1974px"></div><div class="tl" style="left:1980px">3:30</div>
<div class="tb" style="left:2141px"></div><div class="tl" style="left:2147px">3:45</div>
<div class="tb" style="left:2307px"></div><div class="tl" style="left:2313px">4:00</div>
<div class="tb" style="left:2474px"></div><div class="tl" style="left:2480px">4:15</div>
<div class="ts" style="left:28px"></div><div class="ts" style="left:83px"></div><div class="ts" style="left:195px"></div><div class="ts" style="left:250px"></div>
<div class="ts" style="left:361px"></div><div class="ts" style="left:417px"></div><div class="ts" style="left:528px"></div><div class="ts" style="left:584px"></div>
<div class="ts" style="left:695px"></div><div class="ts" style="left:750px"></div><div class="ts" style="left:862px"></div><div class="ts" style="left:917px"></div>
<div class="ts" style="left:1029px"></div><div class="ts" style="left:1084px"></div><div class="ts" style="left:1195px"></div><div class="ts" style="left:1251px"></div>
<div class="ts" style="left:1362px"></div><div class="ts" style="left:1418px"></div><div class="ts" style="left:1529px"></div><div class="ts" style="left:1584px"></div>
<div class="ts" style="left:1696px"></div><div class="ts" style="left:1751px"></div><div class="ts" style="left:1863px"></div><div class="ts" style="left:1918px"></div>
<div class="ts" style="left:2029px"></div><div class="ts" style="left:2085px"></div><div class="ts" style="left:2196px"></div><div class="ts" style="left:2252px"></div>
<div class="ts" style="left:2363px"></div><div class="ts" style="left:2418px"></div><div class="ts" style="left:2530px"></div>

<div style="left:2596px;top:1586px;width:28px;height:26px;background:#f0b060"></div>
<svg style="position:absolute;left:2598px;top:1588px" width="24" height="22"><path d="M4 8v6M8 4v14M12 7v8M16 3v16M20 8v6" stroke="#3a2a10" stroke-width="2"/></svg>
<div style="left:2633px;top:1586px;width:70px;height:26px;background:#1e1e1e;border:1px solid #111"></div>
<div style="left:2636px;top:1589px;width:20px;height:20px;background:#2e6e86"></div>
<div style="left:2638px;top:1587px;font-size:19px;color:#c8c8c8;line-height:24px">1.00x</div>
<div style="left:2734px;top:1586px;width:30px;height:26px;background:#1e1e1e;border:1px solid #111;color:#bbb;font-size:18px;text-align:center;line-height:24px">H</div>
<div style="left:2770px;top:1586px;width:30px;height:26px;background:#1e1e1e;border:1px solid #111;color:#bbb;font-size:18px;text-align:center;line-height:24px">W</div>

<div style="left:0;top:0;width:4px;height:1634px;background:#767676"></div>
<div style="left:0;top:1628px;width:2852px;height:6px;background:#767676"></div>
<div style="left:0;top:1612px;width:20px;height:22px;border-left:4px solid #767676;border-bottom:6px solid #767676;border-bottom-left-radius:10px;background:transparent"></div>
<div style="left:2848px;top:0;width:4px;height:1634px;background:#555"></div>
</body></html>
